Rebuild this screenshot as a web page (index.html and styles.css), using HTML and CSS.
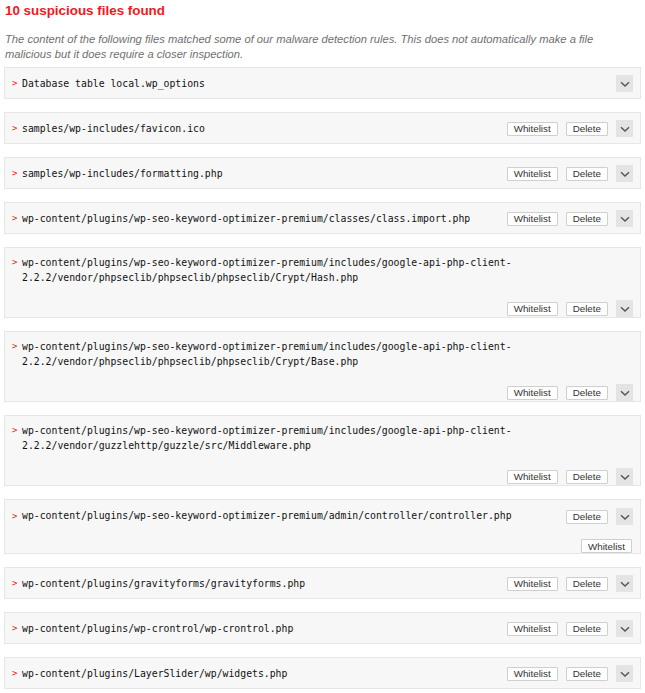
FILE: index.html
```html
<!DOCTYPE html>
<html lang="en">
<head>
<meta charset="utf-8">
<title>Suspicious files</title>
<link rel="stylesheet" href="styles.css">
</head>
<body>
<main class="report">
  <h2 class="report-title">10 suspicious files found</h2>
  <p class="report-desc">The content of the following files matched some of our malware detection rules. This does not automatically make a file malicious but it does require a closer inspection.</p>

  <ul class="file-list">
    <li class="card">
      <div class="file-name"><span class="caret">&gt;</span><span class="path">Database table local.wp_options</span></div>
      <div class="actions">
        <button class="toggle" aria-label="Expand"><svg viewBox="0 0 16 16" width="16" height="16"><path d="M4 6.2 L8 10 L12 6.2" fill="none" stroke="#555" stroke-width="1.4"/></svg></button>
      </div>
    </li>
    <li class="card">
      <div class="file-name"><span class="caret">&gt;</span><span class="path">samples/wp-includes/favicon.ico</span></div>
      <div class="actions">
        <button class="btn">Whitelist</button><button class="btn">Delete</button>
        <button class="toggle" aria-label="Expand"><svg viewBox="0 0 16 16" width="16" height="16"><path d="M4 6.2 L8 10 L12 6.2" fill="none" stroke="#555" stroke-width="1.4"/></svg></button>
      </div>
    </li>
    <li class="card">
      <div class="file-name"><span class="caret">&gt;</span><span class="path">samples/wp-includes/formatting.php</span></div>
      <div class="actions">
        <button class="btn">Whitelist</button><button class="btn">Delete</button>
        <button class="toggle" aria-label="Expand"><svg viewBox="0 0 16 16" width="16" height="16"><path d="M4 6.2 L8 10 L12 6.2" fill="none" stroke="#555" stroke-width="1.4"/></svg></button>
      </div>
    </li>
    <li class="card">
      <div class="file-name"><span class="caret">&gt;</span><span class="path">wp-content/plugins/wp-seo-keyword-optimizer-premium/classes/class.import.php</span></div>
      <div class="actions">
        <button class="btn">Whitelist</button><button class="btn">Delete</button>
        <button class="toggle" aria-label="Expand"><svg viewBox="0 0 16 16" width="16" height="16"><path d="M4 6.2 L8 10 L12 6.2" fill="none" stroke="#555" stroke-width="1.4"/></svg></button>
      </div>
    </li>
    <li class="card stack">
      <div class="file-name"><span class="caret">&gt;</span><span class="path">wp-content/plugins/wp-seo-keyword-optimizer-premium/includes/google-api-php-client-<br>2.2.2/vendor/phpseclib/phpseclib/phpseclib/Crypt/Hash.php</span></div>
      <div class="actions">
        <button class="btn">Whitelist</button><button class="btn">Delete</button>
        <button class="toggle" aria-label="Expand"><svg viewBox="0 0 16 16" width="16" height="16"><path d="M4 6.2 L8 10 L12 6.2" fill="none" stroke="#555" stroke-width="1.4"/></svg></button>
      </div>
    </li>
    <li class="card stack">
      <div class="file-name"><span class="caret">&gt;</span><span class="path">wp-content/plugins/wp-seo-keyword-optimizer-premium/includes/google-api-php-client-<br>2.2.2/vendor/phpseclib/phpseclib/phpseclib/Crypt/Base.php</span></div>
      <div class="actions">
        <button class="btn">Whitelist</button><button class="btn">Delete</button>
        <button class="toggle" aria-label="Expand"><svg viewBox="0 0 16 16" width="16" height="16"><path d="M4 6.2 L8 10 L12 6.2" fill="none" stroke="#555" stroke-width="1.4"/></svg></button>
      </div>
    </li>
    <li class="card stack">
      <div class="file-name"><span class="caret">&gt;</span><span class="path">wp-content/plugins/wp-seo-keyword-optimizer-premium/includes/google-api-php-client-<br>2.2.2/vendor/guzzlehttp/guzzle/src/Middleware.php</span></div>
      <div class="actions">
        <button class="btn">Whitelist</button><button class="btn">Delete</button>
        <button class="toggle" aria-label="Expand"><svg viewBox="0 0 16 16" width="16" height="16"><path d="M4 6.2 L8 10 L12 6.2" fill="none" stroke="#555" stroke-width="1.4"/></svg></button>
      </div>
    </li>
    <li class="card split">
      <div class="file-name"><span class="caret">&gt;</span><span class="path">wp-content/plugins/wp-seo-keyword-optimizer-premium/admin/controller/controller.php</span></div>
      <div class="actions">
        <div class="actions-row">
          <button class="btn">Delete</button>
          <button class="toggle" aria-label="Expand"><svg viewBox="0 0 16 16" width="16" height="16"><path d="M4 6.2 L8 10 L12 6.2" fill="none" stroke="#555" stroke-width="1.4"/></svg></button>
        </div>
        <button class="btn btn-wrap">Whitelist</button>
      </div>
    </li>
    <li class="card">
      <div class="file-name"><span class="caret">&gt;</span><span class="path">wp-content/plugins/gravityforms/gravityforms.php</span></div>
      <div class="actions">
        <button class="btn">Whitelist</button><button class="btn">Delete</button>
        <button class="toggle" aria-label="Expand"><svg viewBox="0 0 16 16" width="16" height="16"><path d="M4 6.2 L8 10 L12 6.2" fill="none" stroke="#555" stroke-width="1.4"/></svg></button>
      </div>
    </li>
    <li class="card">
      <div class="file-name"><span class="caret">&gt;</span><span class="path">wp-content/plugins/wp-crontrol/wp-crontrol.php</span></div>
      <div class="actions">
        <button class="btn">Whitelist</button><button class="btn">Delete</button>
        <button class="toggle" aria-label="Expand"><svg viewBox="0 0 16 16" width="16" height="16"><path d="M4 6.2 L8 10 L12 6.2" fill="none" stroke="#555" stroke-width="1.4"/></svg></button>
      </div>
    </li>
    <li class="card">
      <div class="file-name"><span class="caret">&gt;</span><span class="path">wp-content/plugins/LayerSlider/wp/widgets.php</span></div>
      <div class="actions">
        <button class="btn">Whitelist</button><button class="btn">Delete</button>
        <button class="toggle" aria-label="Expand"><svg viewBox="0 0 16 16" width="16" height="16"><path d="M4 6.2 L8 10 L12 6.2" fill="none" stroke="#555" stroke-width="1.4"/></svg></button>
      </div>
    </li>
  </ul>
</main>
</body>
</html>
```
FILE: styles.css
```css
html, body {
  margin: 0;
  padding: 0;
  background: #ffffff;
}

.report {
  padding: 0 4px;
  font-family: "Liberation Sans", Arial, sans-serif;
}

.report-title {
  margin: 0;
  padding: 2px 0 0 1px;
  font-size: 13.4px;
  line-height: 18px;
  font-weight: bold;
  color: #f2181c;
}

.report-desc {
  margin: 12px 0 0 1px;
  font-size: 11.2px;
  line-height: 15px;
  font-style: italic;
  color: #6f6f6f;
}

.file-list {
  list-style: none;
  margin: 5px 0 0;
  padding: 0;
  display: flex;
  flex-direction: column;
  gap: 13px;
}

.card {
  display: flex;
  align-items: center;
  background: #f7f7f7;
  border: 1px solid #e6e6e6;
  padding: 7px 7px 6px 7px;
}

.file-name {
  flex: 1 1 auto;
  display: flex;
  align-items: flex-start;
  font-family: "DejaVu Sans Mono", "Liberation Mono", monospace;
  font-size: 9.8px;
  line-height: 15px;
  color: #111;
}

.caret {
  flex: none;
  width: 10px;
  color: #f2181c;
  font-size: 9px;
}

.path {
  flex: 1 1 auto;
}

.actions {
  display: flex;
  align-items: center;
  gap: 8px;
}

.btn {
  font-family: "Liberation Sans", Arial, sans-serif;
  font-size: 9.8px;
  line-height: 11px;
  color: #333;
  background: #ffffff;
  border: 1px solid #cfcfcf;
  border-radius: 1px;
  padding: 0 6px;
  margin: 0;
  height: 14px;
}

.toggle {
  width: 17px;
  height: 17px;
  padding: 0;
  margin: 0;
  border: none;
  background: #e4e4e4;
  display: flex;
  align-items: center;
  justify-content: center;
}

.card.stack {
  flex-direction: column;
  align-items: stretch;
  padding-bottom: 0;
}

.card.stack .actions {
  align-self: flex-end;
  margin-top: 15px;
}

.card.split {
  align-items: flex-start;
  padding-top: 8px;
  padding-bottom: 0;
}

.card.split .file-name {
  line-height: 16px;
}

.card.split .actions {
  flex-direction: column;
  align-items: flex-end;
  gap: 14px;
}

.actions-row {
  display: flex;
  align-items: center;
  gap: 8px;
}

.btn-wrap {
  margin-right: 1px;
}
```
